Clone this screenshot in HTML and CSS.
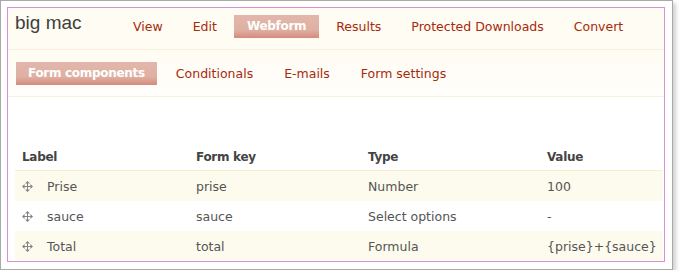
FILE: index.html
```html
<!DOCTYPE html>
<html lang="en">
  <head>
    <meta charset="UTF-8" />
    <link rel="stylesheet" href="styles.css">
  </head>
  <body>
    <!-- outer frame of the shot -->
    <div class="frame">
      <div class="page">
        <!-- title and main tabs -->
        <div class="head">
          <h1 class="title">big mac</h1>
          <ul class="tabs">
            <li><a href="javascript:;">View</a></li>
            <li><a href="javascript:;">Edit</a></li>
            <li><a href="javascript:;" class="active">Webform</a></li>
            <li><a href="javascript:;">Results</a></li>
            <li><a href="javascript:;">Protected Downloads</a></li>
            <li><a href="javascript:;">Convert</a></li>
          </ul>
        </div>
        <!-- second row of tabs -->
        <div class="subhead">
          <ul class="subtabs">
            <li><a href="javascript:;" class="active">Form components</a></li>
            <li><a href="javascript:;">Conditionals</a></li>
            <li><a href="javascript:;">E-mails</a></li>
            <li><a href="javascript:;">Form settings</a></li>
          </ul>
        </div>
        <!-- components -->
        <table class="components">
          <colgroup>
            <col class="c1" /><col class="c2" /><col class="c3" /><col />
          </colgroup>
          <thead>
            <tr><th>Label</th><th>Form key</th><th>Type</th><th>Value</th></tr>
          </thead>
          <tbody>
            <tr class="odd">
              <td><svg class="move" viewBox="0 0 11 11"><path d="M5.5 0L3 2.6H8ZM5.5 11L3 8.4H8ZM0 5.5L2.6 3V8ZM11 5.5L8.4 3V8Z"/><path d="M5.5 2V9M2 5.5H9" stroke="#858585" stroke-width="1"/></svg>Prise</td>
              <td>prise</td><td>Number</td><td>100</td>
            </tr>
            <tr>
              <td><svg class="move" viewBox="0 0 11 11"><path d="M5.5 0L3 2.6H8ZM5.5 11L3 8.4H8ZM0 5.5L2.6 3V8ZM11 5.5L8.4 3V8Z"/><path d="M5.5 2V9M2 5.5H9" stroke="#858585" stroke-width="1"/></svg>sauce</td>
              <td>sauce</td><td>Select options</td><td>-</td>
            </tr>
            <tr class="odd">
              <td><svg class="move" viewBox="0 0 11 11"><path d="M5.5 0L3 2.6H8ZM5.5 11L3 8.4H8ZM0 5.5L2.6 3V8ZM11 5.5L8.4 3V8Z"/><path d="M5.5 2V9M2 5.5H9" stroke="#858585" stroke-width="1"/></svg>Total</td>
              <td>total</td><td>Formula</td><td>{prise}+{sauce}</td>
            </tr>
          </tbody>
        </table>
      </div>
    </div>
  </body>
</html>
```

FILE: styles.css
```css
* {
  margin: 0;
  padding: 0;
}
body {
  background-color: #fff;
  font-family: "DejaVu Sans", Verdana, sans-serif;
  font-size: 12.5px;
}
ul {
  list-style: none;
}
a {
  text-decoration: none;
  color: #a8290b;
}
/* gray frame with shadow */
.frame {
  width: 658px;
  height: 255px;
  padding: 6px 7px 7px 6px;
  border: 1px solid #a9a9a9;
  background-color: #fff;
  box-shadow: 3px 3px 4px rgba(0, 0, 0, 0.18);
}
/* pink page box */
.page {
  height: 253px;
  border: 1px solid #d890da;
  overflow: hidden;
  background-color: #fff;
}
.head {
  display: flex;
  align-items: flex-start;
  height: 41px;
  background-color: #fffcf3;
  border-bottom: 1px solid #f7f1dd;
}
.title {
  width: 105px;
  margin-top: 4px;
  padding-left: 7px;
  font-family: "Liberation Sans", Arial, sans-serif;
  font-size: 19px;
  font-weight: normal;
  line-height: 22px;
  color: #404040;
}
.tabs {
  display: flex;
  gap: 4px;
  margin-top: 7px;
}
.tabs a,
.subtabs a {
  display: block;
  padding: 0 13px;
  line-height: 23px;
}
.tabs a.active,
.subtabs a.active {
  color: #fff;
  font-weight: bold;
  font-size: 12px;
  letter-spacing: -0.3px;
  background: linear-gradient(#e2b7ab 0%, #dfb0a3 65%, #d48b7a 100%);
}
.subhead {
  height: 46px;
  padding-left: 8px;
  background: linear-gradient(#fffcf3, #fffefb);
  border-bottom: 1px solid #f8f2e0;
}
.subtabs {
  display: flex;
  gap: 7px;
  padding-top: 12px;
}
.subtabs a {
  padding: 0 12px;
}
/* components table */
.components {
  width: 648px;
  margin: 47px 0 0 7px;
  border-collapse: collapse;
  table-layout: fixed;
  color: #555;
}
.components .c1 {
  width: 174px;
}
.components .c2 {
  width: 172px;
}
.components .c3 {
  width: 179px;
}
.components th {
  height: 26px;
  padding-left: 7px;
  text-align: left;
  font-size: 12px;
  letter-spacing: -0.3px;
  color: #444;
}
.components td {
  height: 30px;
  padding-left: 7px;
  white-space: nowrap;
}
.components tbody tr:first-child {
  border-top: 1px solid #f8efcf;
}
.components tr.odd {
  background-color: #fdfbee;
}
.move {
  width: 11px;
  height: 11px;
  margin-right: 14px;
  vertical-align: -1px;
  fill: #858585;
}
```
